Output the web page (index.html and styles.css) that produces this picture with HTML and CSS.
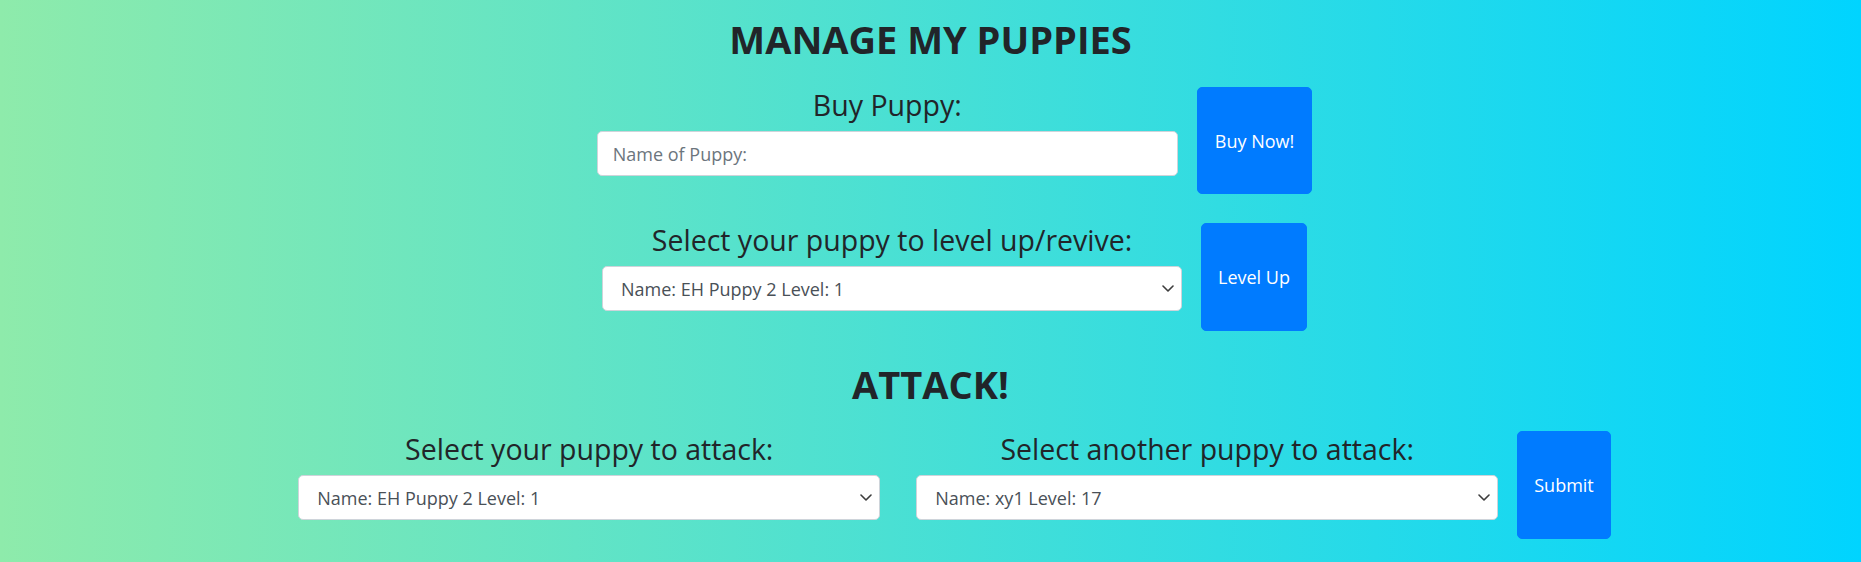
FILE: index.html
```html
<!DOCTYPE html>
<html lang="en">
<head>
<meta charset="utf-8">
<title>Manage My Puppies</title>
<link rel="stylesheet" href="styles.css">
</head>
<body>
<main class="page">
  <h1 class="title">MANAGE MY PUPPIES</h1>

  <form class="row row-buy">
    <div class="group">
      <h4 class="label">Buy Puppy:</h4>
      <input class="control" type="text" placeholder="Name of Puppy:">
    </div>
    <button class="btn" type="button">Buy Now!</button>
  </form>

  <form class="row row-level">
    <div class="group">
      <h4 class="label">Select your puppy to level up/revive:</h4>
      <div class="select-wrap">
        <select class="control select"><option>Name: EH Puppy 2 Level: 1</option></select>
        <svg class="chev" width="12" height="7" viewBox="0 0 12 7"><polyline points="1,1 6,6 11,1" fill="none" stroke="#3d3d3d" stroke-width="1.6" stroke-linecap="round" stroke-linejoin="round"/></svg>
      </div>
    </div>
    <button class="btn" type="button">Level Up</button>
  </form>

  <h1 class="title title-attack">ATTACK!</h1>

  <form class="row row-attack">
    <div class="group group-first">
      <h4 class="label">Select your puppy to attack:</h4>
      <div class="select-wrap">
        <select class="control select"><option>Name: EH Puppy 2 Level: 1</option></select>
        <svg class="chev" width="12" height="7" viewBox="0 0 12 7"><polyline points="1,1 6,6 11,1" fill="none" stroke="#3d3d3d" stroke-width="1.6" stroke-linecap="round" stroke-linejoin="round"/></svg>
      </div>
    </div>
    <div class="group">
      <h4 class="label">Select another puppy to attack:</h4>
      <div class="select-wrap">
        <select class="control select"><option>Name: xy1 Level: 17</option></select>
        <svg class="chev" width="12" height="7" viewBox="0 0 12 7"><polyline points="1,1 6,6 11,1" fill="none" stroke="#3d3d3d" stroke-width="1.6" stroke-linecap="round" stroke-linejoin="round"/></svg>
      </div>
    </div>
    <button class="btn" type="button">Submit</button>
  </form>
</main>
</body>
</html>
```

FILE: styles.css
```css
* { box-sizing: border-box; }

html, body {
  margin: 0;
  padding: 0;
}

body {
  min-height: 100vh;
  background: linear-gradient(90deg, #8eebab 0%, #00d4ff 100%);
  font-family: "Open Sans", "Noto Sans", "DejaVu Sans", sans-serif;
  color: #212529;
  font-size: 19px;
}

.page {
  padding-top: 11px;
}

.title {
  margin: 0;
  text-align: center;
  font-size: 38px;
  line-height: 57px;
  font-weight: 700;
  color: #212529;
}

.title-attack {
  margin-top: 25px;
}

.row {
  display: flex;
  justify-content: center;
  align-items: flex-start;
  gap: 19px;
  padding-left: 48px;
  margin: 0;
}

.row-buy { margin-top: 19px; }
.row-level { margin-top: 29px; }
.row-attack { margin-top: 18px; }

.group {
  width: 581px;
  display: flex;
  flex-direction: column;
  align-items: stretch;
}

.row-buy .group { margin-top: 1px; }
.row-level .group { width: 580px; }
.row-attack .group { width: 582px; margin-top: 1px; }
.group-first { margin-right: 17px; }

.label {
  margin: 0 0 9px;
  text-align: center;
  font-size: 28.5px;
  line-height: 34px;
  font-weight: 400;
  color: #212529;
}

.control {
  display: block;
  width: 100%;
  height: 45px;
  margin: 0;
  padding: 0 15px;
  font-family: inherit;
  font-size: 18px;
  color: #495057;
  background: #ffffff;
  border: 1px solid #ced4da;
  border-radius: 5px;
  outline: none;
}

.control::placeholder {
  color: #6c757d;
  opacity: 1;
}

.select-wrap {
  position: relative;
}

.select {
  appearance: none;
  -webkit-appearance: none;
  padding-left: 18px;
  padding-right: 30px;
  height: 45px;
}

.chev {
  position: absolute;
  right: 8px;
  top: 19px;
  pointer-events: none;
}

.btn {
  height: 107px;
  padding: 0 16px;
  font-family: inherit;
  font-size: 18px;
  color: #ffffff;
  background: #007bff;
  border: 1px solid #007bff;
  border-radius: 5px;
  cursor: pointer;
}

.row-buy .btn {
  padding: 0 17px;
}

.row-level .btn,
.row-attack .btn {
  height: 108px;
}
```
